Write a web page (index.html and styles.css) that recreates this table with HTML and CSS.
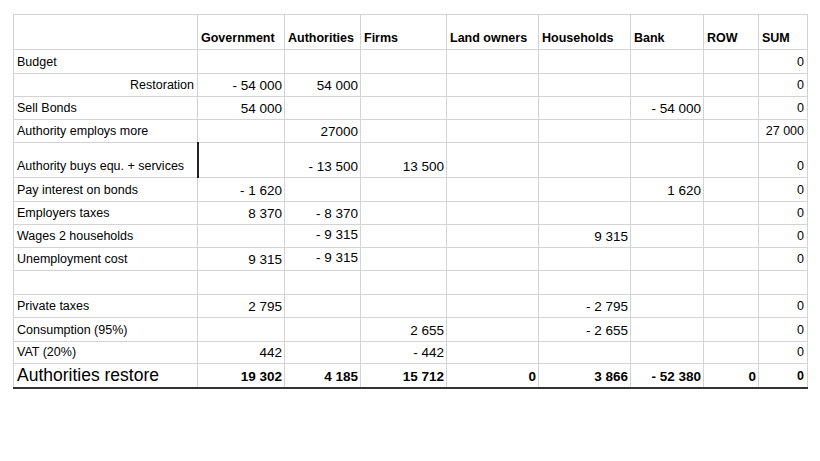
FILE: index.html
```html
<!DOCTYPE html>
<html>
<head>
<meta charset="utf-8">
<link rel="stylesheet" href="styles.css">
</head>
<body>
<table class="sheet">
  <colgroup>
    <col class="c-label"><col class="c-gov"><col class="c-auth"><col class="c-firms"><col class="c-land"><col class="c-house"><col class="c-bank"><col class="c-row"><col class="c-sum">
  </colgroup>
  <tr class="h35 head">
    <td></td><td>Government</td><td>Authorities</td><td>Firms</td><td>Land owners</td><td>Households</td><td>Bank</td><td>ROW</td><td>SUM</td>
  </tr>
  <tr class="h24">
    <td class="lbl">Budget</td><td></td><td></td><td></td><td></td><td></td><td></td><td></td><td class="sum">0</td>
  </tr>
  <tr class="h23">
    <td class="lbl right">Restoration</td><td class="num">- 54 000</td><td class="num">54 000</td><td></td><td></td><td></td><td></td><td></td><td class="sum">0</td>
  </tr>
  <tr class="h23">
    <td class="lbl">Sell Bonds</td><td class="num">54 000</td><td></td><td></td><td></td><td></td><td class="num">- 54 000</td><td></td><td class="sum">0</td>
  </tr>
  <tr class="h23">
    <td class="lbl">Authority employs more</td><td></td><td class="num">27000</td><td></td><td></td><td></td><td></td><td></td><td class="sum">27 000</td>
  </tr>
  <tr class="h35">
    <td class="lbl">Authority buys equ. + services</td><td class="cursor"></td><td class="num">- 13 500</td><td class="num">13 500</td><td></td><td></td><td></td><td></td><td class="sum">0</td>
  </tr>
  <tr class="h24">
    <td class="lbl">Pay interest on bonds</td><td class="num">- 1 620</td><td></td><td></td><td></td><td></td><td class="num">1 620</td><td></td><td class="sum">0</td>
  </tr>
  <tr class="h23">
    <td class="lbl">Employers taxes</td><td class="num">8 370</td><td class="num">- 8 370</td><td></td><td></td><td></td><td></td><td></td><td class="sum">0</td>
  </tr>
  <tr class="h23">
    <td class="lbl">Wages 2 households</td><td></td><td class="num mid">- 9 315</td><td></td><td></td><td class="num">9 315</td><td></td><td></td><td class="sum">0</td>
  </tr>
  <tr class="h23">
    <td class="lbl">Unemployment cost</td><td class="num">9 315</td><td class="num mid">- 9 315</td><td></td><td></td><td></td><td></td><td></td><td class="sum">0</td>
  </tr>
  <tr class="h24">
    <td></td><td></td><td></td><td></td><td></td><td></td><td></td><td></td><td></td>
  </tr>
  <tr class="h23">
    <td class="lbl">Private taxes</td><td class="num">2 795</td><td></td><td></td><td></td><td class="num">- 2 795</td><td></td><td></td><td class="sum">0</td>
  </tr>
  <tr class="h24">
    <td class="lbl">Consumption (95%)</td><td></td><td></td><td class="num">2 655</td><td></td><td class="num">- 2 655</td><td></td><td></td><td class="sum">0</td>
  </tr>
  <tr class="h22">
    <td class="lbl">VAT (20%)</td><td class="num">442</td><td></td><td class="num">- 442</td><td></td><td></td><td></td><td></td><td class="sum">0</td>
  </tr>
  <tr class="h24 total">
    <td class="big">Authorities restore</td><td class="num">19 302</td><td class="num">4 185</td><td class="num">15 712</td><td class="num">0</td><td class="num">3 866</td><td class="num">- 52 380</td><td class="num">0</td><td class="sum">0</td>
  </tr>
</table>
</body>
</html>
```

FILE: styles.css
```css
html, body {
  margin: 0;
  background: #ffffff;
}
body {
  padding: 14px 0 0 13px;
  font-family: "Liberation Sans", Arial, sans-serif;
  color: #000;
}
.sheet {
  border-collapse: collapse;
  table-layout: fixed;
  width: 795px;
}
.c-label { width: 184px; }
.c-gov { width: 87px; }
.c-auth { width: 76px; }
.c-firms { width: 86px; }
.c-land { width: 92px; }
.c-house { width: 92px; }
.c-bank { width: 73px; }
.c-row { width: 55px; }
.c-sum { width: 49px; }

.sheet td {
  border: 1px solid #d3d3d3;
  padding: 0 3px 3px 3px;
  vertical-align: bottom;
  font-size: 12.5px;
  line-height: 15px;
  white-space: nowrap;
  overflow: hidden;
}
.h35 { height: 35px; }
.h24 { height: 24px; }
.h23 { height: 23px; }
.h22 { height: 22px; }

.head td {
  font-weight: bold;
}
.lbl { text-align: left; }
.right { text-align: right; }
.sheet td.num {
  text-align: right;
  font-size: 13.5px;
  padding-right: 2px;
}
.sheet td.mid {
  padding-bottom: 5px;
}
.sheet td.sum {
  text-align: right;
  font-size: 12.5px;
}
.sheet td.cursor {
  border-left: 2px solid #222;
}
.total td {
  font-weight: bold;
  border-bottom: 2px solid #333;
}
.sheet td.big {
  font-weight: normal;
  font-size: 17.5px;
  line-height: 18px;
  padding-bottom: 3px;
}
```
